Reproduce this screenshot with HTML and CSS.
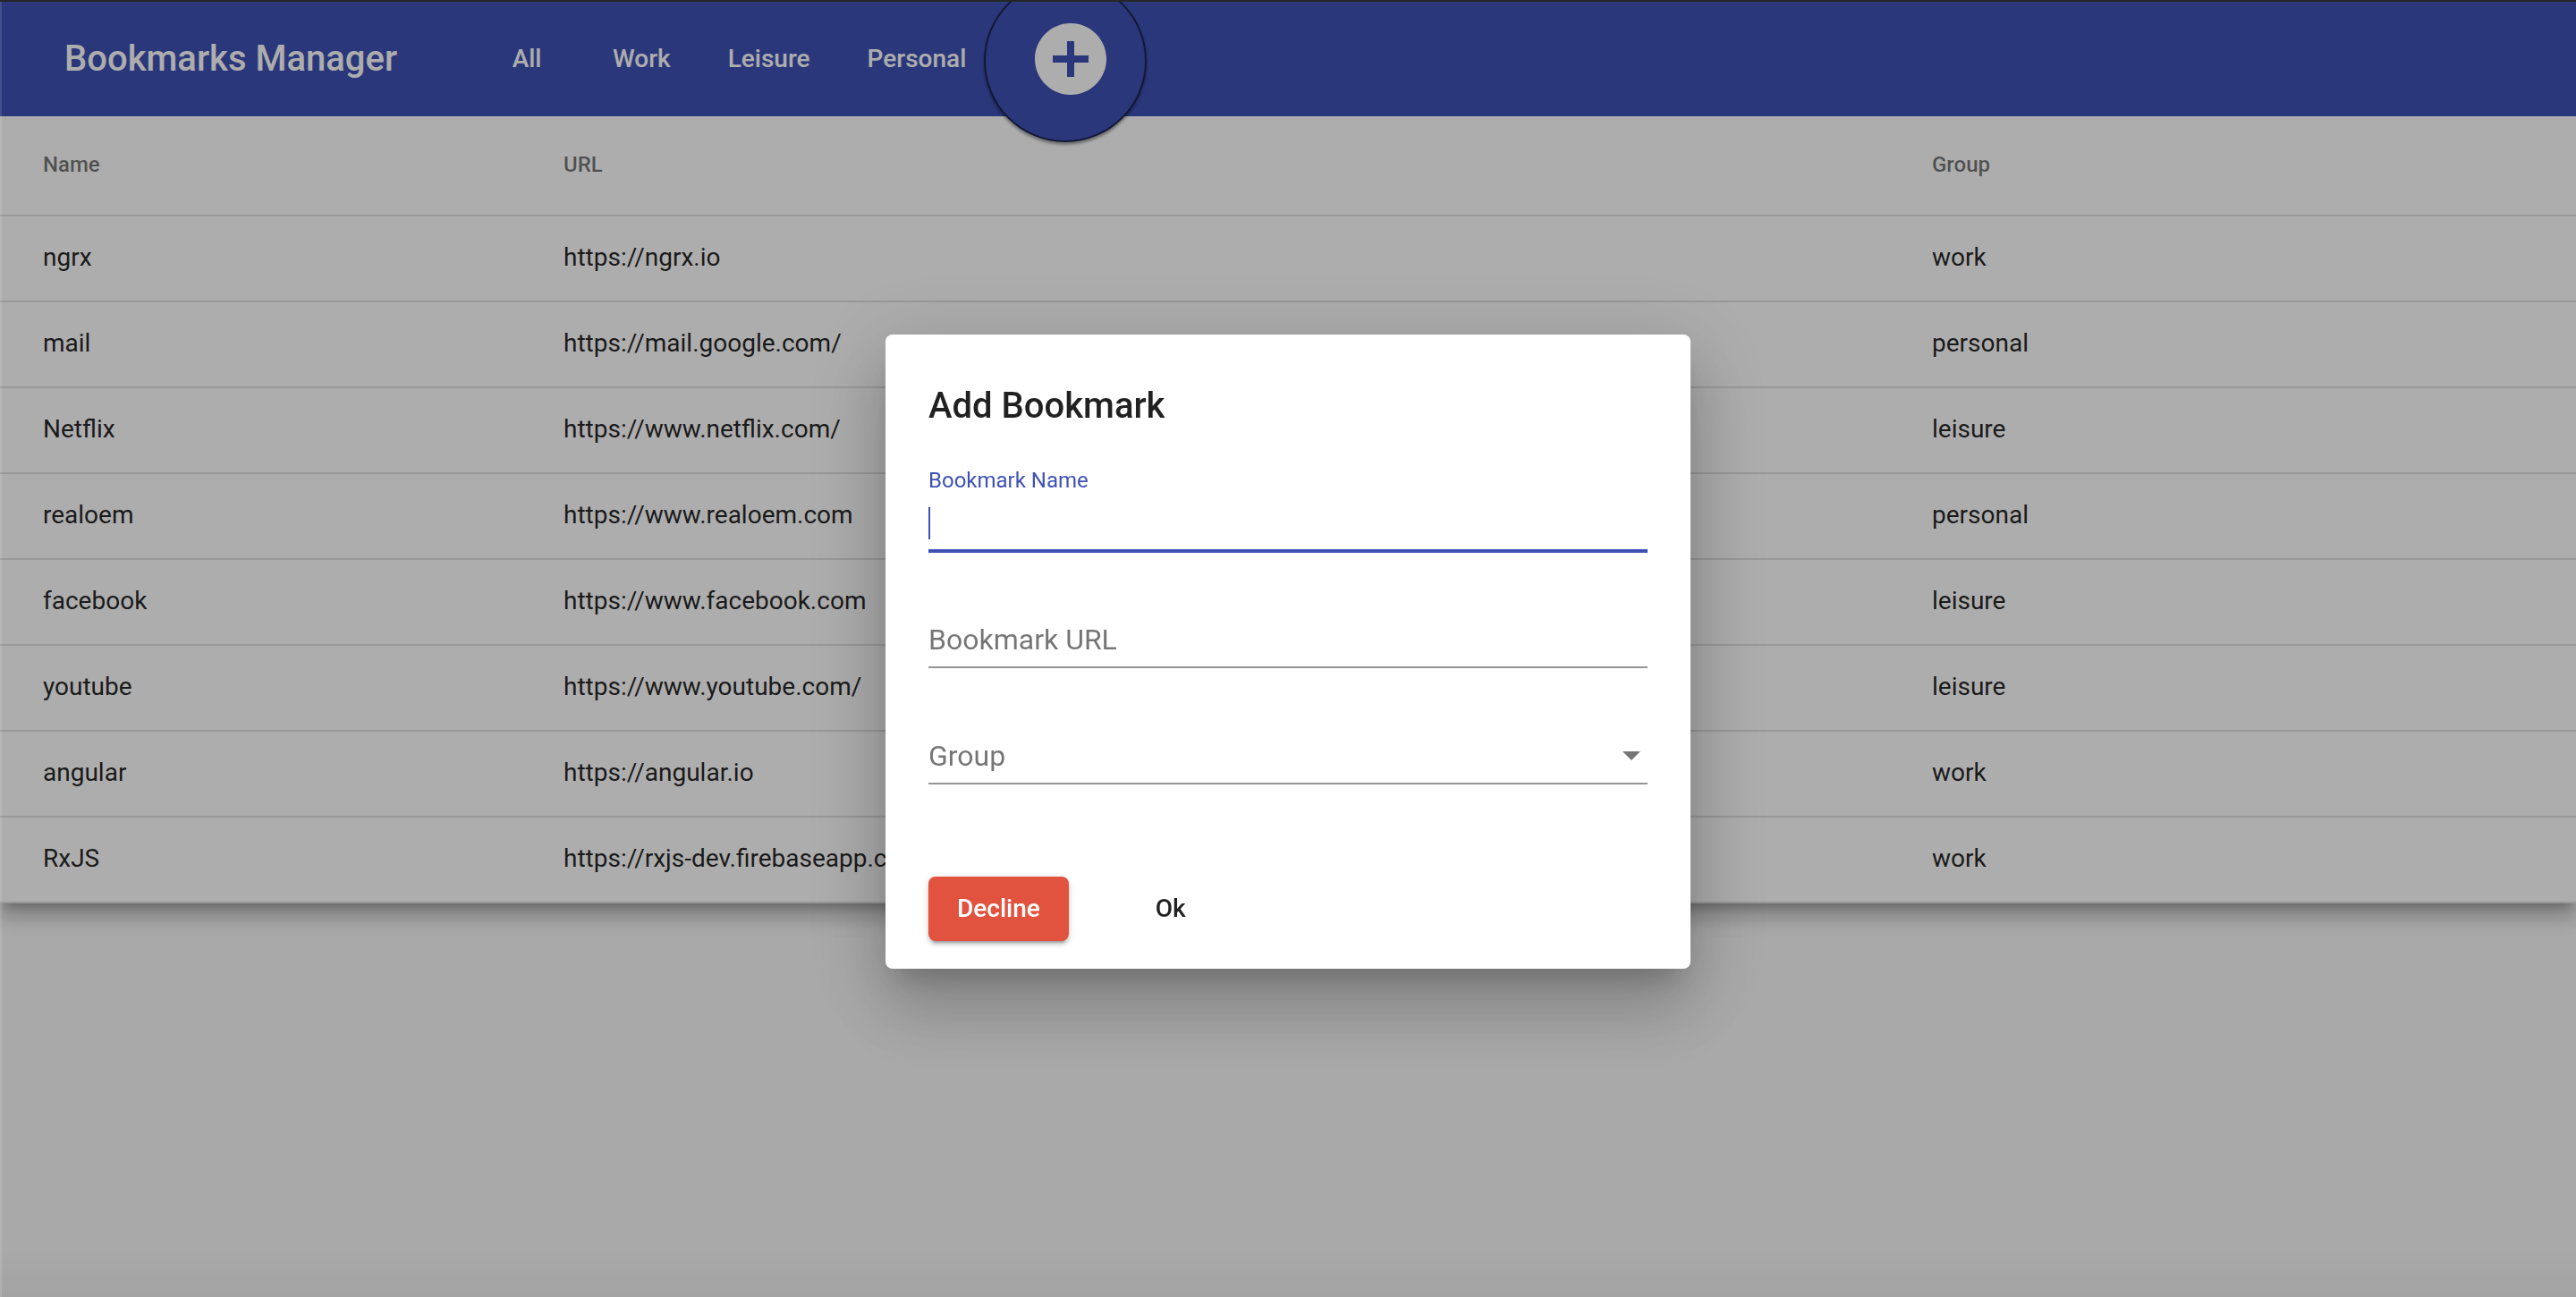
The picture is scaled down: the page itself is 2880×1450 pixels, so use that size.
FILE: index.html
```html
<!DOCTYPE html>
<html lang="en">
<head>
<meta charset="utf-8">
<title>Bookmarks Manager</title>
<link rel="stylesheet" href="styles.css">
</head>
<body>
<header class="toolbar">
  <span class="title">Bookmarks Manager</span>
  <nav class="nav">
    <a class="nav-btn">All</a>
    <a class="nav-btn">Work</a>
    <a class="nav-btn">Leisure</a>
    <a class="nav-btn">Personal</a>
  </nav>
  <button class="fab" aria-label="Add bookmark">
    <svg class="fab-icon" viewBox="0 0 24 24" width="96" height="96"><path fill="#ffffff" d="M12 2C6.48 2 2 6.48 2 12s4.48 10 10 10 10-4.48 10-10S17.520 2 12 2zm5 11h-4v4h-2v-4H7v-2h4V7h2v4h4v2z"/></svg>
  </button>
</header>

<main class="content">
  <div class="table">
    <div class="row head"><div class="cell">Name</div><div class="cell">URL</div><div class="cell">Group</div></div>
    <div class="row"><div class="cell">ngrx</div><div class="cell">https://ngrx.io</div><div class="cell">work</div></div>
    <div class="row"><div class="cell">mail</div><div class="cell">https://mail.google.com/</div><div class="cell">personal</div></div>
    <div class="row"><div class="cell">Netflix</div><div class="cell">https://www.netflix.com/</div><div class="cell">leisure</div></div>
    <div class="row"><div class="cell">realoem</div><div class="cell">https://www.realoem.com</div><div class="cell">personal</div></div>
    <div class="row"><div class="cell">facebook</div><div class="cell">https://www.facebook.com</div><div class="cell">leisure</div></div>
    <div class="row"><div class="cell">youtube</div><div class="cell">https://www.youtube.com/</div><div class="cell">leisure</div></div>
    <div class="row"><div class="cell">angular</div><div class="cell">https://angular.io</div><div class="cell">work</div></div>
    <div class="row"><div class="cell">RxJS</div><div class="cell">https://rxjs-dev.firebaseapp.com/</div><div class="cell">work</div></div>
  </div>
</main>

<div class="backdrop"></div>

<div class="dialog-layer">
  <div class="dialog" role="dialog">
    <h2 class="dialog-title">Add Bookmark</h2>
    <div class="field">
      <div class="field-box focused">
        <div class="field-label">Bookmark Name</div>
        <div class="field-input"><span class="caret"></span></div>
      </div>
    </div>
    <div class="field">
      <div class="field-box">
        <div class="field-label"></div>
        <div class="field-input placeholder">Bookmark URL</div>
      </div>
    </div>
    <div class="field">
      <div class="field-box">
        <div class="field-label"></div>
        <div class="field-input placeholder select">Group<span class="arrow"></span></div>
      </div>
    </div>
    <div class="actions">
      <button class="btn-decline">Decline</button>
      <button class="btn-ok">Ok</button>
    </div>
  </div>
</div>

<div class="frame-top"></div>
<div class="frame-left"></div>
</body>
</html>
```

FILE: styles.css
```css
html, body {
  margin: 0;
  padding: 0;
}
body {
  min-height: 100vh;
  background: linear-gradient(to bottom, #fafafa calc(100% - 60px), #f1f1f1);
  font-family: Roboto, "Liberation Sans", sans-serif;
  overflow: hidden;
}

/* toolbar */
.toolbar {
  position: relative;
  z-index: 2;
  display: flex;
  align-items: center;
  box-sizing: border-box;
  height: 130px;
  padding: 2px 0 0 72px;
  background: #3f51b5;
  color: #ffffff;
}
.title {
  font-weight: 500;
  font-size: 40px;
  line-height: 1;
}
.nav {
  display: flex;
  margin-left: 81px;
}
.nav-btn {
  box-sizing: border-box;
  min-width: 128px;
  padding: 0 32px;
  text-align: center;
  font-weight: 500;
  font-size: 28px;
  line-height: 72px;
  color: #ffffff;
}
.fab {
  position: relative;
  width: 96px;
  height: 96px;
  margin: 0 0 0 37px;
  padding: 0;
  border: 0;
  background: transparent;
}
.fab::before {
  content: "";
  position: absolute;
  left: -49px;
  top: -41px;
  width: 182px;
  height: 182px;
  box-sizing: border-box;
  border-radius: 50%;
  border: 2px solid rgba(0, 0, 0, 0.55);
  background: #3f51b5;
  box-shadow: 0 3px 3px rgba(0, 0, 0, 0.35);
}
.fab-icon {
  position: relative;
  display: block;
}

/* table */
.table {
  background: #ffffff;
  box-shadow: 0 10px 10px -6px rgba(0, 0, 0, 0.2), 0 16px 20px 2px rgba(0, 0, 0, 0.14), 0 6px 28px 4px rgba(0, 0, 0, 0.12);
}
.row {
  display: grid;
  grid-template-columns: 630px 1530px 1fr;
  align-items: center;
  box-sizing: border-box;
  height: 96px;
  padding-bottom: 3px;
  border-bottom: 2px solid rgba(0, 0, 0, 0.12);
  font-size: 28px;
  color: rgba(0, 0, 0, 0.87);
}
.row.head {
  height: 112px;
  padding-bottom: 3px;
  font-size: 24px;
  font-weight: 500;
  color: rgba(0, 0, 0, 0.54);
}
.cell:first-child {
  padding-left: 48px;
}
.cell {
  white-space: nowrap;
}

/* overlay */
.backdrop {
  position: fixed;
  inset: 0;
  z-index: 10;
  background: rgba(0, 0, 0, 0.32);
}
.dialog-layer {
  position: fixed;
  inset: 0;
  z-index: 11;
  display: flex;
  justify-content: center;
  align-items: flex-start;
  padding-top: 374px;
}
.dialog {
  box-sizing: border-box;
  width: 900px;
  padding: 48px 48px 31px;
  background: #ffffff;
  border-radius: 8px;
  box-shadow: 0 22px 30px -14px rgba(0, 0, 0, 0.2), 0 48px 76px 6px rgba(0, 0, 0, 0.14), 0 18px 92px 16px rgba(0, 0, 0, 0.12);
}
.dialog-title {
  margin: 0 0 40px;
  font-size: 40px;
  font-weight: 500;
  line-height: 64px;
  color: rgba(0, 0, 0, 0.87);
}
.field {
  height: 130px;
}
.field-box {
  height: 91px;
  box-sizing: border-box;
  border-bottom: 2px solid #949494;
}
.field-box.focused {
  height: 92px;
  border-bottom: 4px solid #3f51b5;
}
.field-label {
  box-sizing: border-box;
  height: 41px;
  font-size: 24px;
  line-height: 22px;
  color: #3f51b5;
}
.field-input {
  display: flex;
  align-items: center;
  justify-content: space-between;
  height: 36px;
  font-size: 32px;
  line-height: 36px;
  color: rgba(0, 0, 0, 0.87);
}
.field-input.placeholder {
  color: rgba(0, 0, 0, 0.54);
}
.caret {
  width: 2px;
  height: 36px;
  background: #3f51b5;
}
.arrow {
  width: 0;
  height: 0;
  margin-right: 8px;
  border-left: 10px solid transparent;
  border-right: 10px solid transparent;
  border-top: 10px solid #757575;
}
.actions {
  display: flex;
  align-items: center;
  margin-top: 64px;
}
.btn-decline {
  height: 72px;
  padding: 0 32px;
  border: 0;
  border-radius: 8px;
  background: #e1533f;
  color: #ffffff;
  font-family: Roboto, "Liberation Sans", sans-serif;
  font-size: 28px;
  font-weight: 500;
  line-height: 72px;
  box-shadow: 0 6px 2px -4px rgba(0, 0, 0, 0.2), 0 4px 4px 0 rgba(0, 0, 0, 0.14), 0 2px 10px 0 rgba(0, 0, 0, 0.12);
}
.btn-ok {
  min-width: 128px;
  height: 72px;
  margin-left: 50px;
  padding: 0 32px;
  border: 0;
  background: transparent;
  color: rgba(0, 0, 0, 0.87);
  font-family: Roboto, "Liberation Sans", sans-serif;
  font-size: 28px;
  font-weight: 500;
  line-height: 72px;
}

/* window frame edges */
.frame-top {
  position: fixed;
  top: 0;
  left: 0;
  right: 0;
  height: 2px;
  z-index: 20;
  background: #262626;
}
.frame-left {
  position: fixed;
  top: 2px;
  left: 0;
  bottom: 0;
  width: 2px;
  z-index: 20;
  background: rgba(255, 255, 255, 0.12);
}
```
